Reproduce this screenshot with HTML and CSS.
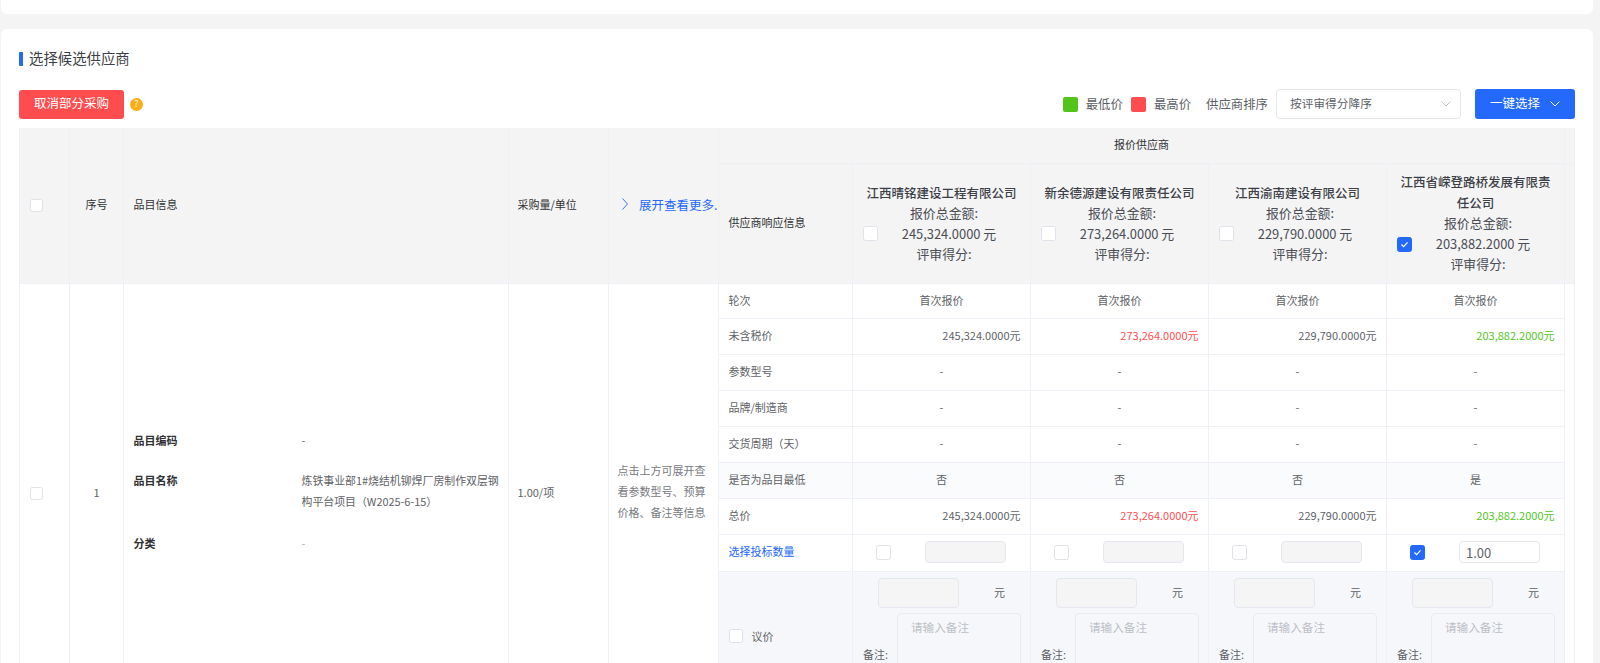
FILE: index.html
```html
<!DOCTYPE html>
<html lang="zh-CN">
<head>
<meta charset="utf-8">
<title>选择候选供应商</title>
<link rel="stylesheet" href="styles.css">
</head>
<body>
<div class="page">
  <div class="card card-top"></div>
  <section class="card card-main">
    <h2 class="title">选择候选供应商</h2>
    <div class="toolbar">
      <div class="tool-left">
        <button class="btn btn-red"><span class="btn-text">取消部分采购</span></button>
        <span class="help">?</span>
      </div>
      <div class="tool-right">
        <span class="swatch swatch-green"></span><span class="legend-text">最低价</span>
        <span class="swatch swatch-red"></span><span class="legend-text">最高价</span>
        <span class="sort-label">供应商排序</span>
        <div class="select">
          <span class="btn-text">按评审得分降序</span>
          <svg class="chev" viewBox="0 0 10 6"><path d="M.5.5 5 5 9.500.5"/></svg>
        </div>
        <button class="btn btn-blue"><span class="btn-text">一键选择</span><svg class="chev chev-white" viewBox="0 0 10 6"><path d="M.5.5 5 5 9.500.5"/></svg></button>
      </div>
    </div>
    <table class="grid">
      <colgroup>
        <col class="c-check"><col class="c-no"><col class="c-info"><col class="c-qty"><col class="c-more">
        <col class="c-resp"><col class="c-sup"><col class="c-sup"><col class="c-sup"><col class="c-sup"><col class="c-gut">
      </colgroup>
      <thead>
        <tr class="h1">
          <th rowspan="2"><span class="cb cb-sm"></span></th>
          <th rowspan="2" class="center">序号</th>
          <th rowspan="2">品目信息</th>
          <th rowspan="2" class="qty-cell">采购量/单位</th>
          <th rowspan="2" class="more"><div class="more-in"><svg class="chev-r" viewBox="0 0 6 12"><path d="M.5.5 5.500 6 .5 11.500"/></svg><span class="more-text">展开查看更多.</span></div></th>
          <th colspan="5" class="center">报价供应商</th>
          <th></th>
        </tr>
        <tr class="h2">
          <th>供应商响应信息</th>
          <th class="sup"><div class="sup-name">江西晴铭建设工程有限公司</div><div class="sup-line">报价总金额:</div><div class="sup-price"><span class="cb"></span><span class="sup-num">245,324.0000 元</span></div><div class="sup-line">评审得分:</div></th>
          <th class="sup"><div class="sup-name">新余德源建设有限责任公司</div><div class="sup-line">报价总金额:</div><div class="sup-price"><span class="cb"></span><span class="sup-num">273,264.0000 元</span></div><div class="sup-line">评审得分:</div></th>
          <th class="sup"><div class="sup-name">江西渝南建设有限公司</div><div class="sup-line">报价总金额:</div><div class="sup-price"><span class="cb"></span><span class="sup-num">229,790.0000 元</span></div><div class="sup-line">评审得分:</div></th>
          <th class="sup"><div class="sup-name">江西省嵘登路桥发展有限责任公司</div><div class="sup-line">报价总金额:</div><div class="sup-price"><span class="cb cb-on"><svg viewBox="0 0 15 15"><path d="M4 7.500 6.500 10 11 5"/></svg></span><span class="sup-num">203,882.2000 元</span></div><div class="sup-line">评审得分:</div></th>
          <th></th>
        </tr>
      </thead>
      <tbody>
        <tr class="r r1">
          <td rowspan="9"><span class="cb cb-sm"></span></td>
          <td rowspan="9" class="center">1</td>
          <td rowspan="9" class="info-cell">
            <dl class="info">
              <dt>品目编码</dt><dd>-</dd>
              <dt class="info-long">品目名称</dt><dd class="info-long">炼铁事业部1#烧结机铆焊厂房制作双层钢构平台项目（W2025-6-15）</dd>
              <dt>分类</dt><dd class="muted">-</dd>
            </dl>
          </td>
          <td rowspan="9" class="qty-cell">1.00/项</td>
          <td rowspan="9" class="hint">点击上方可展开查看参数型号、预算价格、备注等信息</td>
          <td>轮次</td><td class="center">首次报价</td><td class="center">首次报价</td><td class="center">首次报价</td><td class="center">首次报价</td>
          <td rowspan="9"></td>
        </tr>
        <tr class="r">
          <td>未含税价</td><td class="num">245,324.0000元</td><td class="num high">273,264.0000元</td><td class="num">229,790.0000元</td><td class="num low">203,882.2000元</td>
        </tr>
        <tr class="r"><td>参数型号</td><td class="center">-</td><td class="center">-</td><td class="center">-</td><td class="center">-</td></tr>
        <tr class="r"><td>品牌/制造商</td><td class="center">-</td><td class="center">-</td><td class="center">-</td><td class="center">-</td></tr>
        <tr class="r"><td>交货周期（天）</td><td class="center">-</td><td class="center">-</td><td class="center">-</td><td class="center">-</td></tr>
        <tr class="r stripe"><td>是否为品目最低</td><td class="center">否</td><td class="center">否</td><td class="center">否</td><td class="center">是</td></tr>
        <tr class="r">
          <td>总价</td><td class="num">245,324.0000元</td><td class="num high">273,264.0000元</td><td class="num">229,790.0000元</td><td class="num low">203,882.2000元</td>
        </tr>
        <tr class="r r8">
          <td class="link">选择投标数量</td>
          <td class="pick"><div class="pick-in"><span class="cb"></span><input class="qty" disabled></div></td>
          <td class="pick"><div class="pick-in"><span class="cb"></span><input class="qty" disabled></div></td>
          <td class="pick"><div class="pick-in"><span class="cb"></span><input class="qty" disabled></div></td>
          <td class="pick"><div class="pick-in"><span class="cb cb-on"><svg viewBox="0 0 15 15"><path d="M4 7.500 6.500 10 11 5"/></svg></span><input class="qty qty-on" value="1.00"></div></td>
        </tr>
        <tr class="r9">
          <td class="bargain-head"><div class="bargain"><span class="cb cb-md"></span><span>议价</span></div></td>
          <td class="nego"><div class="nego-top"><input class="price" disabled><span>元</span></div><div class="nego-note"><span>备注:</span><textarea placeholder="请输入备注"></textarea></div></td>
          <td class="nego"><div class="nego-top"><input class="price" disabled><span>元</span></div><div class="nego-note"><span>备注:</span><textarea placeholder="请输入备注"></textarea></div></td>
          <td class="nego"><div class="nego-top"><input class="price" disabled><span>元</span></div><div class="nego-note"><span>备注:</span><textarea placeholder="请输入备注"></textarea></div></td>
          <td class="nego"><div class="nego-top"><input class="price" disabled><span>元</span></div><div class="nego-note"><span>备注:</span><textarea placeholder="请输入备注"></textarea></div></td>
        </tr>
      </tbody>
    </table>
  </section>
</div>
</body>
</html>
```
FILE: styles.css
```css
* { box-sizing: border-box; }
html, body { margin: 0; height: 100%; overflow: hidden; }
body {
  background: #f4f4f4;
  color: #606266;
  font-family: "Noto Sans CJK SC", "Noto Sans", sans-serif;
  font-size: 11px;
}
.page { padding: 0 7px 0 1px; }
.card { background: #fff; border-radius: 6px; }
.card-top { height: 14px; border-radius: 0 0 6px 6px; }
.card-main { margin-top: 15px; padding: 23px 18px 0; }
.title {
  margin: 0 0 23px;
  height: 14px;
  padding-left: 6px;
  border-left: 4px solid #2468f8;
  border-radius: 1px;
  color: #3c3f46;
  font-size: 14.4px;
  font-weight: 400;
  line-height: 12px;
}
.toolbar { display: flex; justify-content: space-between; align-items: center; height: 30px; margin-bottom: 9px; }
.tool-left, .tool-right { display: flex; align-items: center; }
.btn { border: 0; border-radius: 3px; color: #fff; font: inherit; font-size: 12.5px; height: 29px; padding: 0; }
.btn-text { position: relative; top: -1.500px; }
.btn-red { width: 105px; background: #ff4d4f; }
.btn-blue { width: 100px; height: 30px; background: #2369fb; display: flex; align-items: center; padding-left: 15px; }
.help {
  width: 13px; height: 13px; margin-left: 6px; border-radius: 50%;
  background: #faad14; color: #fff; font-size: 9px; line-height: 12px; text-align: center;
}
.swatch { width: 15px; height: 15px; border-radius: 2px; }
.swatch-green { background: #52c41a; }
.swatch-red { background: #ff4d4f; margin-left: 8px; }
.legend-text { margin-left: 8px; font-size: 12.4px; color: #5c5f66; }
.sort-label { margin-left: 15px; font-size: 12.4px; color: #5c5f66; }
.select {
  width: 185px; height: 30px; margin-left: 8px; margin-right: 14px; padding: 0 9px 0 13px;
  display: flex; align-items: center; justify-content: space-between;
  border: 1px solid #e4e7ed; border-radius: 4px; font-size: 11.7px; color: #5c5f66; background: #fff;
}
.chev { width: 10px; height: 6px; fill: none; stroke: #c0c4cc; stroke-width: 1; }
.chev-white { stroke: #fff; margin-left: 10px; }
.grid { table-layout: fixed; width: 1556px; border-collapse: separate; border-spacing: 0; }
.c-check { width: 51px; } .c-no { width: 54px; } .c-info { width: 385px; } .c-qty { width: 100px; }
.c-more { width: 110px; } .c-resp { width: 134px; } .c-sup { width: 178px; } .c-gut { width: 10px; }
th, td {
  padding: 0 9.500px 3px;
  border-right: 1px solid #eef0f5;
  border-bottom: 1px solid #eef0f5;
  vertical-align: middle;
  text-align: left;
  font-weight: 400;
  overflow: hidden;
}
tr > :first-child[rowspan] { border-left: 1px solid #eef0f5; }
thead th { background: #f4f4f5; color: #303133; font-weight: 400; }
.h1 { height: 36px; }
.h2 { height: 120px; }
.center, thead th.center { text-align: center; }
.qty-cell, thead th.qty-cell { padding-left: 8.500px; }
.more { padding-right: 0; padding-left: 13px; }
.more-in { display: flex; align-items: center; }
.chev-r { width: 6px; height: 12px; flex: none; fill: none; stroke: #2369fb; stroke-width: .9; }
.more-text { margin-left: 11px; color: #2369fb; font-size: 12.5px; white-space: nowrap; font-weight: 400; }
thead th.sup { padding: 0 9.500px; font-size: 12.9px; line-height: 20.500px; text-align: center; color: #4a4d54; font-weight: 400; }
.sup-name { color: #3c3f46; font-size: 12.5px; font-weight: 500; }
.sup-line { padding-left: 5px; }
.sup-price { display: flex; align-items: center; }
.sup-num { flex: 1; text-align: center; }
.cb {
  display: inline-block; flex: none; width: 15px; height: 15px; border: 1px solid #dfe2e8; border-radius: 2.500px;
  background: #fff; vertical-align: middle;
}
.cb-sm { width: 13px; height: 13px; }
.cb-md { width: 14px; height: 14px; }
.cb-on { background: #2369fb; border-color: #2369fb; }
.cb-on svg { display: block; width: 13px; height: 13px; fill: none; stroke: #fff; stroke-width: 1.400; }
.r { height: 36px; background: #fff; }
.r1 { height: 35px; }
.r8 { height: 37px; }
.r8 td { padding-bottom: 4px; }
.r8 .pick { padding: 0 0 2px 23px; }
.stripe td { background: #fafbfc; }
.num { text-align: right; color: #606266; }
.high { color: #ff4d4f; }
.low { color: #52c41a; }
.link { color: #2369fb; }
.info-cell { padding-right: 4px; }
.info { display: grid; grid-template-columns: 168px 1fr; margin: 0; }
.info dt { padding: 10px 0; color: #303133; font-weight: 700; line-height: 20.500px; }
.info dd { margin: 0; padding: 10px 0; line-height: 20.500px; font-size: 10.900px; }
.info .info-long { padding-bottom: 12px; }
.muted { color: #a8abb2; }
.hint { padding-left: 8.500px; color: #777a80; line-height: 20.700px; }
.pick-in { display: flex; align-items: center; }
.qty { width: 81px; height: 22px; margin-left: 34px; padding: 0 5px; border: 1px solid #e4e7ed; border-radius: 4px; background: #f5f5f5; font: inherit; font-size: 13px; color: #606266; }
.qty-on { background: #fff; padding-left: 6px; }
.r9 td { background: #f6f7fa; vertical-align: top; padding: 6px 0 5px 0; }
.r9 .bargain-head { padding: 0 9.500px 3px; vertical-align: middle; }
.bargain { display: flex; align-items: center; gap: 9px; }
.nego { color: #5c5f66; }
.nego-top { display: flex; align-items: center; padding-left: 25px; }
.price { width: 81px; height: 30px; padding: 0; border: 1px solid #e4e7ed; border-radius: 4px; background: #f5f5f5; }
.nego-top span { margin-left: 35px; padding-bottom: 2px; }
.nego-note { display: flex; align-items: center; margin-top: 5px; padding-left: 10px; }
.nego-note span { width: 34px; flex: none; padding-bottom: 3px; }
textarea {
  width: 124px; height: 84px; padding: 3px 13px; resize: none; display: block;
  border: 1px solid #e9ebf0; border-radius: 4px; background: #f6f7fa; font: inherit; font-size: 11.600px; line-height: 20px;
}
textarea::placeholder { color: #bcbfc6; opacity: 1; }
```
